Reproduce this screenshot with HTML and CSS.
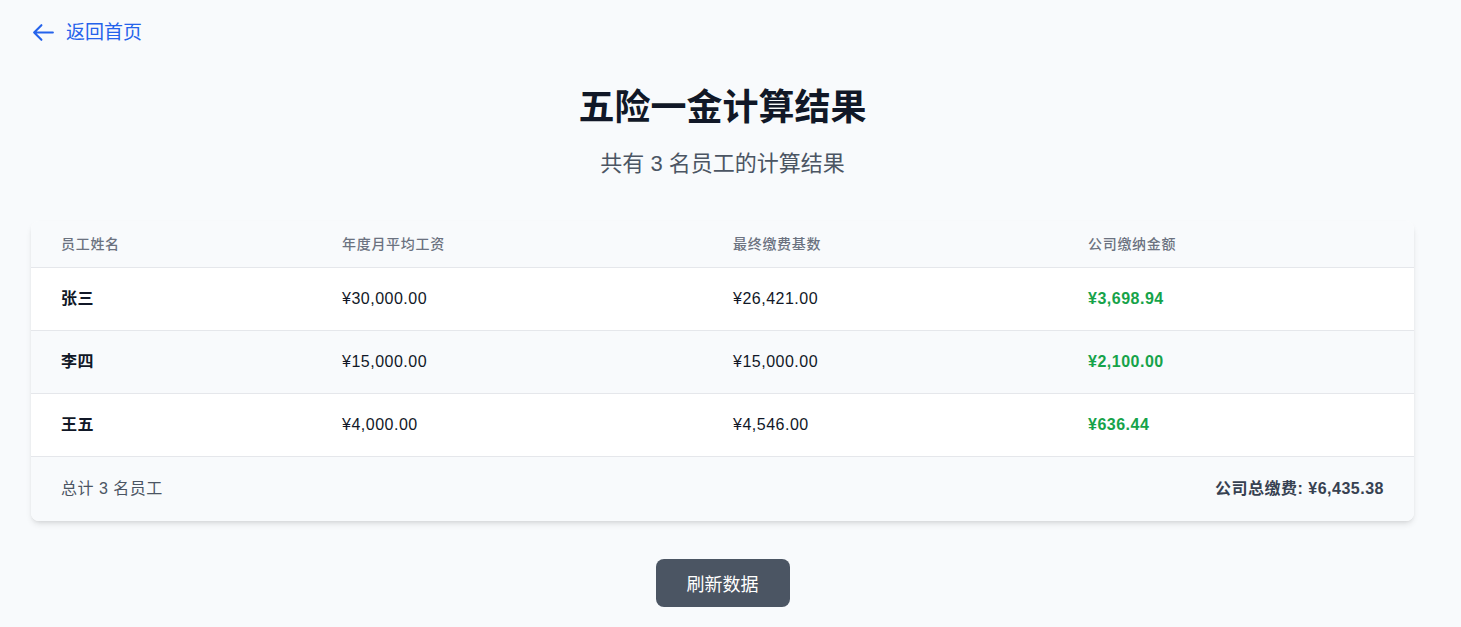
FILE: index.html
```html
<!DOCTYPE html>
<html lang="zh-CN">
<head>
    <meta charset="UTF-8">
    <meta name="viewport" content="width=device-width, initial-scale=1.0">
    <title>五险一金计算结果</title>
    <link rel="stylesheet" href="styles.css">
</head>
<body>
    <div class="page">
        <a class="back-link" href="#">
            <svg class="back-icon" viewBox="0 0 24 24" fill="none" stroke="currentColor" stroke-width="2" stroke-linecap="round" stroke-linejoin="round">
                <path d="M10 19l-7-7m0 0l7-7m-7 7h18"/>
            </svg>
            <span>返回首页</span>
        </a>

        <div class="header">
            <h1>五险一金计算结果</h1>
            <p class="subtitle">共有 3 名员工的计算结果</p>
        </div>

        <div class="card">
            <table>
                <thead>
                    <tr>
                        <th class="col-name">员工姓名</th>
                        <th class="col-salary">年度月平均工资</th>
                        <th class="col-base">最终缴费基数</th>
                        <th class="col-amount">公司缴纳金额</th>
                    </tr>
                </thead>
                <tbody>
                    <tr>
                        <td class="name">张三</td>
                        <td>¥30,000.00</td>
                        <td>¥26,421.00</td>
                        <td class="amount">¥3,698.94</td>
                    </tr>
                    <tr class="alt">
                        <td class="name">李四</td>
                        <td>¥15,000.00</td>
                        <td>¥15,000.00</td>
                        <td class="amount">¥2,100.00</td>
                    </tr>
                    <tr>
                        <td class="name">王五</td>
                        <td>¥4,000.00</td>
                        <td>¥4,546.00</td>
                        <td class="amount">¥636.44</td>
                    </tr>
                </tbody>
            </table>
            <div class="card-footer">
                <span class="count">总计 3 名员工</span>
                <span class="total">公司总缴费: ¥6,435.38</span>
            </div>
        </div>

        <div class="actions">
            <button class="refresh-btn">刷新数据</button>
        </div>
    </div>
</body>
</html>
```

FILE: styles.css
```css
body {
    font-family: "Liberation Sans", Arial, "Noto Sans CJK SC", sans-serif;
    margin: 0;
    padding: 0;
    background-color: #f8fafc;
    color: #111827;
}
.page {
    padding: 20px 47px 40px 31px;
}
.back-link {
    display: inline-flex;
    align-items: center;
    gap: 10px;
    color: #2563eb;
    text-decoration: none;
    font-size: 19px;
    line-height: 24px;
}
.back-icon {
    width: 25px;
    height: 25px;
}
.header {
    text-align: center;
    margin-top: 39px;
}
.header h1 {
    margin: 0;
    font-size: 36px;
    line-height: 40px;
    font-weight: 700;
    color: #111827;
}
.subtitle {
    margin: 21px 0 0;
    font-size: 22px;
    line-height: 30px;
    color: #4b5563;
}
.card {
    margin-top: 42px;
    background-color: #fff;
    border-radius: 8px;
    overflow: hidden;
    box-shadow: 0 4px 6px -1px rgba(0, 0, 0, 0.1), 0 2px 4px -2px rgba(0, 0, 0, 0.1);
}
table {
    width: 100%;
    border-collapse: collapse;
    table-layout: fixed;
}
th, td {
    text-align: left;
    padding-left: 30px;
}
th {
    background-color: #f8fafc;
    color: #6b7280;
    font-size: 14px;
    font-weight: 500;
    letter-spacing: 0.05em;
    line-height: 20px;
    padding-top: 13px;
    padding-bottom: 13px;
    border-bottom: 1px solid #e5e7eb;
}
.col-name { width: 250px; }
.col-salary { width: 360px; }
.col-base { width: 324px; }
td {
    font-size: 16px;
    line-height: 20px;
    letter-spacing: 0.5px;
    padding-top: 21px;
    padding-bottom: 21px;
    color: #111827;
    border-bottom: 1px solid #e5e7eb;
}
tr.alt td {
    background-color: #f8fafc;
}
td.name {
    font-weight: 700;
}
td.amount {
    font-weight: 700;
    color: #16a34a;
}
.card-footer {
    display: flex;
    justify-content: space-between;
    align-items: center;
    background-color: #f8fafc;
    padding: 22px 30px 22px;
    font-size: 16px;
    line-height: 20px;
    letter-spacing: 0.5px;
}
.count {
    color: #4b5563;
}
.total {
    font-weight: 700;
    color: #374151;
}
.actions {
    display: flex;
    justify-content: center;
    margin-top: 38px;
}
.refresh-btn {
    font-family: inherit;
    height: 48px;
    padding: 0 31px;
    font-size: 18px;
    color: #fff;
    background-color: #4b5563;
    border: none;
    border-radius: 8px;
    cursor: pointer;
}
.refresh-btn:hover {
    background-color: #374151;
}
```
